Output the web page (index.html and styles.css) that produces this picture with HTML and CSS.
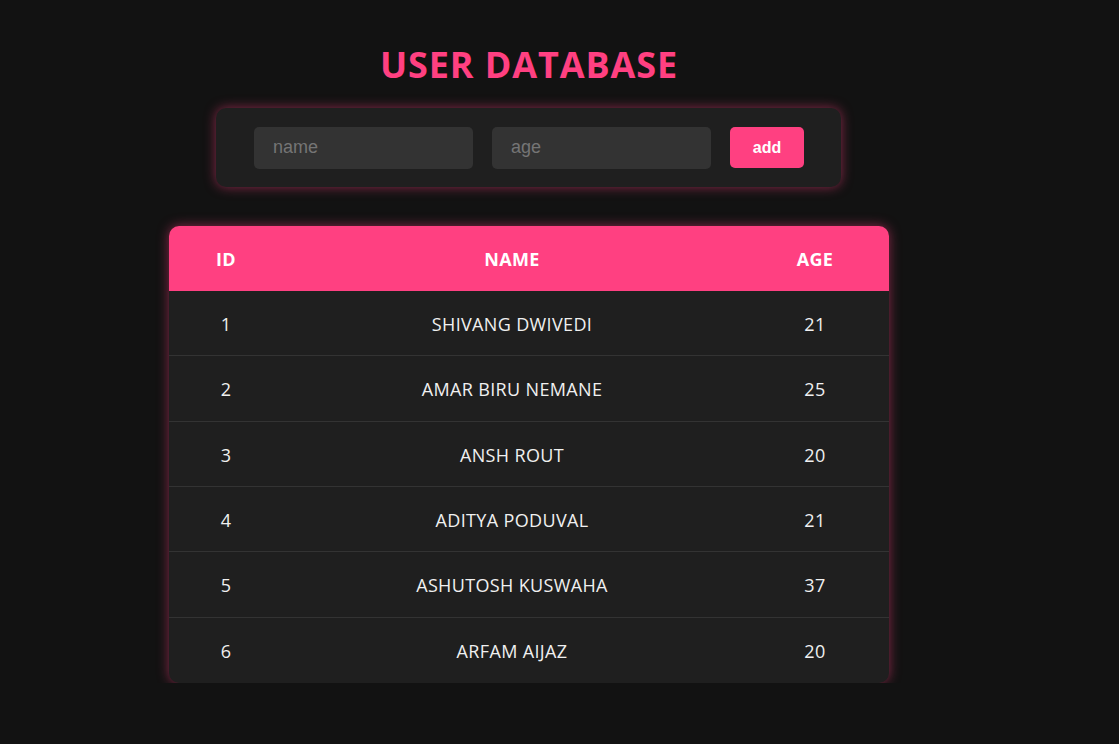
FILE: index.html
```html
<!DOCTYPE html>
<html lang="en">
<head>
<meta charset="utf-8">
<title>User Database</title>
<link rel="stylesheet" href="styles.css">
</head>
<body>
<div class="app">
  <h1 class="title">USER DATABASE</h1>
  <form class="form">
    <input class="field" type="text" placeholder="name">
    <input class="field" type="text" placeholder="age">
    <button class="btn" type="button">add</button>
  </form>
  <table class="table">
    <thead>
      <tr><th class="c-id">ID</th><th class="c-name">NAME</th><th class="c-age">AGE</th></tr>
    </thead>
    <tbody>
      <tr><td>1</td><td>SHIVANG DWIVEDI</td><td>21</td></tr>
      <tr><td>2</td><td>AMAR BIRU NEMANE</td><td>25</td></tr>
      <tr><td>3</td><td>ANSH ROUT</td><td>20</td></tr>
      <tr><td>4</td><td>ADITYA PODUVAL</td><td>21</td></tr>
      <tr><td>5</td><td>ASHUTOSH KUSWAHA</td><td>37</td></tr>
      <tr><td>6</td><td>ARFAM AIJAZ</td><td>20</td></tr>
    </tbody>
  </table>
</div>
</body>
</html>
```

FILE: styles.css
```css
html, body {
  margin: 0;
  padding: 0;
  background: #121212;
}
body {
  font-family: "Open Sans", "Noto Sans", sans-serif;
  color: #eeeeee;
}
.app {
  width: 720px;
  margin-left: 169px;
  padding-top: 42px;
  display: flex;
  flex-direction: column;
  align-items: center;
}
.title {
  margin: 0;
  color: #ff4081;
  font-size: 36px;
  font-weight: 700;
  line-height: 46px;
  letter-spacing: 0.9px;
}
.form {
  align-self: flex-start;
  margin: 20px 0 0 47px;
  width: 625px;
  box-sizing: border-box;
  height: 79px;
  padding: 0 37px 0 38px;
  background: #1f1f1f;
  border-radius: 10px;
  box-shadow: 0 0 12px rgba(255, 64, 129, 0.5);
  display: flex;
  align-items: center;
  gap: 19px;
}
.field {
  width: 219px;
  height: 42px;
  box-sizing: border-box;
  border: none;
  outline: none;
  border-radius: 5px;
  background: #333333;
  color: #eeeeee;
  padding: 0 19px;
  font-family: "Liberation Sans", Arial, sans-serif;
  font-size: 18px;
}
.field::placeholder {
  color: #757575;
}
.btn {
  width: 75px;
  height: 41px;
  border: none;
  border-radius: 5px;
  background: #ff4081;
  color: #ffffff;
  font-family: "Liberation Sans", Arial, sans-serif;
  font-weight: 700;
  font-size: 16px;
}
.table {
  margin-top: 39px;
  width: 720px;
  border-collapse: separate;
  border-spacing: 0;
  background: #1f1f1f;
  border-radius: 10px;
  overflow: hidden;
  box-shadow: 0 0 12px rgba(255, 64, 129, 0.5);
  font-size: 18px;
}
.table th {
  background: #ff4081;
  color: #ffffff;
  font-weight: 700;
  height: 65px;
  padding: 0;
  letter-spacing: 0.3px;
}
.c-id { width: 114px; }
.c-age { width: 148px; }
.table td {
  height: 65.33px;
  padding: 0;
  padding-top: 2px;
  box-sizing: border-box;
  text-align: center;
  color: #f0f0f0;
  border-bottom: 1px solid #333333;
  letter-spacing: 0.35px;
}
.table tbody tr:last-child td {
  border-bottom: none;
}
```
